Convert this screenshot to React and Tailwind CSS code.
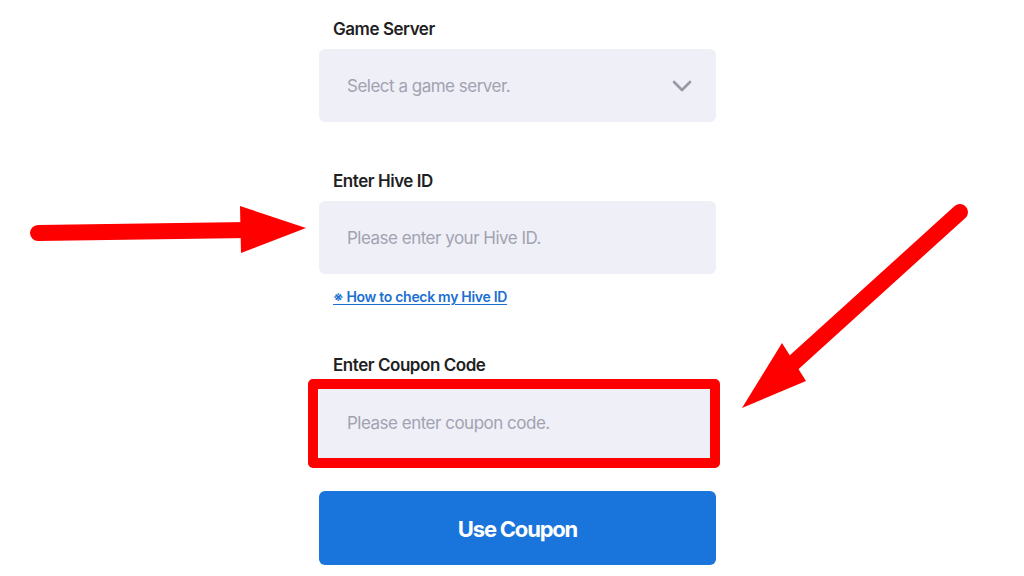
export default function App() {
  return (
    <div
      className="relative w-[1024px] h-[576px] overflow-hidden bg-white"
      style={{ fontFamily: "Inter, 'Noto Sans', sans-serif" }}
    >
      <div className="ml-[319px] w-[397px] pt-[19px] flex flex-col">
        <label className="pl-[14px] h-[20px] leading-[20px] text-[17px] font-semibold tracking-[-0.45px] text-[#1f1f24]">
          Game Server
        </label>
        <div className="mt-[10px] h-[73px] rounded-[6px] bg-[#efeff8] flex items-center justify-between pl-[28px] pr-[24px]">
          <span className="text-[17px] tracking-[-0.5px] text-[#a2a2b0] mt-[2px]">Select a game server.</span>
          <svg width="20" height="12" viewBox="0 0 20 12" fill="none">
            <path d="M2 2l8 8 8-8" stroke="#9898a6" strokeWidth="2.6" strokeLinecap="round" strokeLinejoin="round" />
          </svg>
        </div>

        <label className="mt-[49px] pl-[14px] h-[20px] leading-[20px] text-[17px] font-semibold tracking-[-0.45px] text-[#1f1f24]">
          Enter Hive ID
        </label>
        <div className="mt-[10px] h-[73px] rounded-[6px] bg-[#efeff8] flex items-center pl-[28px]">
          <span className="text-[17px] tracking-[-0.5px] text-[#a2a2b0] mt-[2px]">Please enter your Hive ID.</span>
        </div>
        <a className="mt-[15px] ml-[14px] h-[16px] leading-[16px] text-[14px] font-semibold tracking-[-0.3px] text-[#1a6fd1] underline underline-offset-2 self-start">
          ※ How to check my Hive ID
        </a>

        <label className="mt-[50px] pl-[14px] h-[20px] leading-[20px] text-[17px] font-semibold tracking-[-0.45px] text-[#1f1f24]">
          Enter Coupon Code
        </label>
        <div className="relative mt-[12px] h-[73px] rounded-[6px] bg-[#efeff8] flex items-center pl-[28px]">
          <span className="text-[17px] tracking-[-0.5px] text-[#a2a2b0] mt-[1px]">Please enter coupon code.</span>
          <div className="absolute left-[-11px] right-[-4px] top-[-8px] bottom-[-8px] border-[10px] border-[#ff0000] rounded-[5px]" />
        </div>

        <button className="mt-[31px] h-[74px] rounded-[6px] bg-[#1975db] text-white text-[22px] font-bold tracking-[-1.2px]">
          <span className="relative top-[1px]">Use Coupon</span>
        </button>
      </div>

      <svg className="absolute inset-0 pointer-events-none" width="1024" height="576" viewBox="0 0 1024 576">
        <line x1="38" y1="233" x2="248" y2="230" stroke="#ff0000" strokeWidth="16" strokeLinecap="round" />
        <polygon points="240,206 306,228 241,253" fill="#ff0000" />
        <line x1="960" y1="212" x2="790" y2="366" stroke="#ff0000" strokeWidth="16" strokeLinecap="round" />
        <polygon points="782,343 806,381 742,408" fill="#ff0000" />
      </svg>
    </div>
  );
}
